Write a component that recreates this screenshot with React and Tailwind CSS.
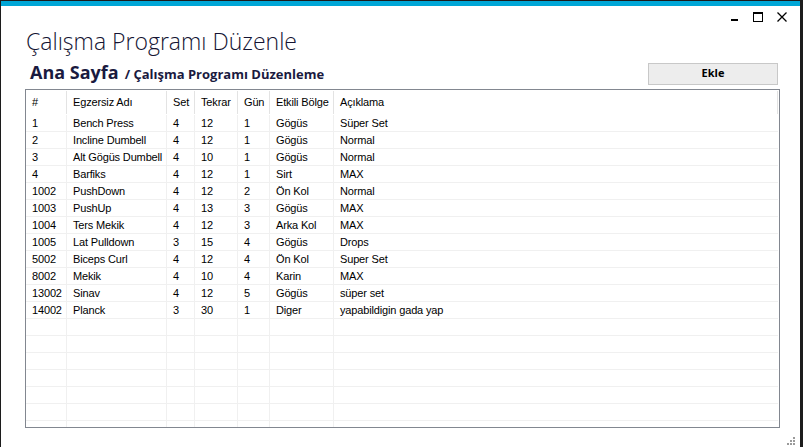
import React from 'react';

const rows = [
  ['1', 'Bench Press', '4', '12', '1', 'Gögüs', 'Süper Set'],
  ['2', 'Incline Dumbell', '4', '12', '1', 'Gögüs', 'Normal'],
  ['3', 'Alt Gögüs Dumbell', '4', '10', '1', 'Gögüs', 'Normal'],
  ['4', 'Barfiks', '4', '12', '1', 'Sirt', 'MAX'],
  ['1002', 'PushDown', '4', '12', '2', 'Ön Kol', 'Normal'],
  ['1003', 'PushUp', '4', '13', '3', 'Gögüs', 'MAX'],
  ['1004', 'Ters Mekik', '4', '12', '3', 'Arka Kol', 'MAX'],
  ['1005', 'Lat Pulldown', '3', '15', '4', 'Gögüs', 'Drops'],
  ['5002', 'Biceps Curl', '4', '12', '4', 'Ön Kol', 'Super Set'],
  ['8002', 'Mekik', '4', '10', '4', 'Karin', 'MAX'],
  ['13002', 'Sinav', '4', '12', '5', 'Gögüs', 'süper set'],
  ['14002', 'Planck', '3', '30', '1', 'Diger', 'yapabildigin gada yap'],
];

const headers = ['#', 'Egzersiz Adı', 'Set', 'Tekrar', 'Gün', 'Etkili Bölge', 'Açıklama'];
const widths = ['w-[41px]', 'w-[100px]', 'w-[28px]', 'w-[43px]', 'w-[32px]', 'w-[64px]', 'flex-1'];

const emptyRows = Array.from({ length: 7 }, () => ['', '', '', '', '', '', '']);

const Row = ({ cells }) => (
  <div className="flex h-[17px] shrink-0 border-b border-[#f0f0f0]">
    {cells.map((c, i) => (
      <div
        key={i}
        className={`${widths[i]} shrink-0 pl-[6px] leading-[16px] whitespace-nowrap overflow-hidden ${i < 6 ? 'border-r border-[#f0f0f0]' : ''}`}
      >
        {c}
      </div>
    ))}
  </div>
);

export default function App() {
  return (
    <div className="w-[803px] h-[447px] bg-[#1c1c1c] pl-[1px] pr-[3px] pt-[1px] overflow-hidden">
      <div className="h-full bg-white flex flex-col">
        {/* window chrome */}
        <div className="h-[5px] bg-[#00a6d6] shrink-0" />
        <div className="h-[22px] flex justify-end items-start pr-[13px] pt-[6px] gap-[14px] shrink-0">
          <div className="w-[10px] h-[10px] flex items-end justify-center">
            <div className="w-[7px] h-[2px] bg-black mb-[1px]" />
          </div>
          <div className="w-[10px] h-[10px] border border-black border-t-2" />
          <svg width="10" height="10" viewBox="0 0 10 10">
            <path d="M0.5 0.5 L9.5 9.5 M9.5 0.5 L0.5 9.5" stroke="black" strokeWidth="1.3" />
          </svg>
        </div>

        {/* title */}
        <div
          className="pl-[25px] text-[23px] leading-[28px] font-light text-[#141433] shrink-0 -mt-[1px]"
          style={{ fontFamily: '"Open Sans", sans-serif' }}
        >
          Çalışma Programı Düzenle
        </div>

        <div className="flex items-end justify-between pl-[29px] pr-[22px] mt-[6px] shrink-0">
          <div className="flex items-baseline text-[#1a1a3f] font-bold" style={{ fontFamily: '"Open Sans", sans-serif' }}>
            <span className="text-[18px] leading-[22px]">Ana Sayfa</span>
            <span className="text-[13px] ml-[6px]">/ Çalışma Programı Düzenleme</span>
          </div>
          <button
            className="w-[130px] h-[22px] bg-[#ededed] border border-[#c8c8c8] text-[11px] font-bold text-black flex items-center justify-center"
            style={{ fontFamily: '"Open Sans", sans-serif' }}
          >
            Ekle
          </button>
        </div>

        {/* grid */}
        <div
          className="ml-[24px] mr-[20px] mt-[4px] h-[339px] border border-[#828790] flex flex-col overflow-hidden text-[11px] tracking-[-0.15px] text-black"
          style={{ fontFamily: '"Liberation Sans", Arial, sans-serif' }}
        >
          <div className="flex h-[25px] shrink-0 pr-[1px]">
            {headers.map((h, i) => (
              <div
                key={i}
                className={`${widths[i]} shrink-0 pl-[6px] flex items-center border-r border-[#e3e3e3] my-[1px]`}
              >
                {h}
              </div>
            ))}
          </div>
          <div className="flex flex-col pr-[1px]">
            {rows.map((r, i) => (
              <Row key={i} cells={r} />
            ))}
            {emptyRows.map((r, i) => (
              <Row key={'e' + i} cells={r} />
            ))}
          </div>
        </div>

        <div className="flex justify-end pr-[4px] mt-[9px]">
          <svg width="9" height="9" viewBox="0 0 9 9">
            <rect x="6" y="0" width="2" height="2" fill="#9a9a9a" />
            <rect x="3" y="3" width="2" height="2" fill="#9a9a9a" />
            <rect x="6" y="3" width="2" height="2" fill="#9a9a9a" />
            <rect x="0" y="6" width="2" height="2" fill="#9a9a9a" />
            <rect x="3" y="6" width="2" height="2" fill="#9a9a9a" />
            <rect x="6" y="6" width="2" height="2" fill="#9a9a9a" />
          </svg>
        </div>
      </div>
    </div>
  );
}
